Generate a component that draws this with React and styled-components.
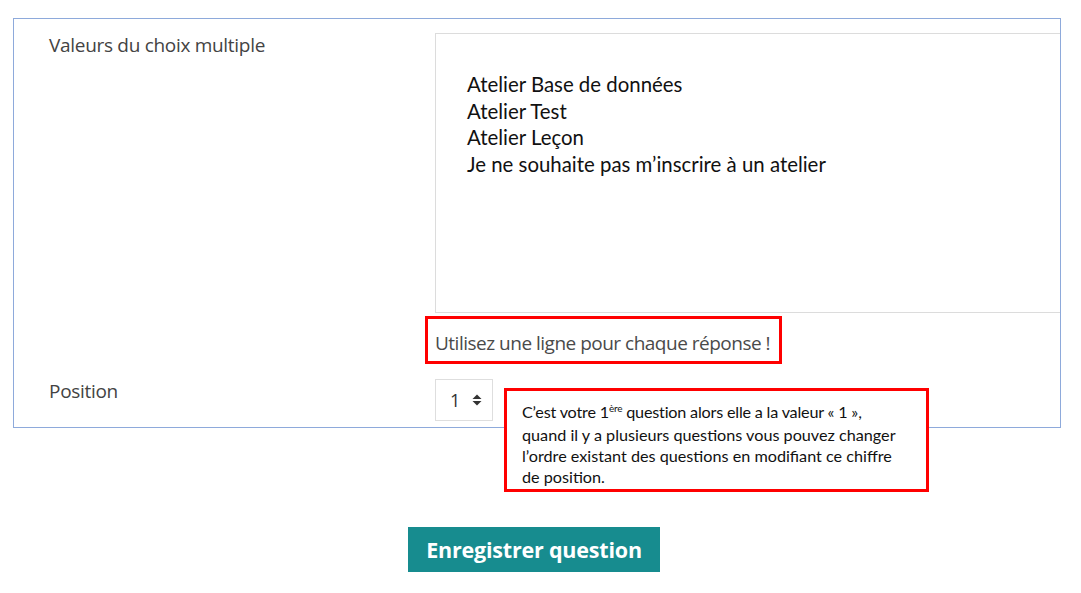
import React from 'react'
import styled, { createGlobalStyle } from 'styled-components'

const GlobalStyle = createGlobalStyle`
  body {
    margin: 0;
    background: #ffffff;
    font-family: "Open Sans", Lato, sans-serif;
  }
`

const Page = styled.div`
  width: 1081px;
  height: 593px;
  padding-top: 18px;
  box-sizing: border-box;
  overflow: hidden;
`

const Panel = styled.div`
  margin-left: 13px;
  width: 1048px;
  height: 410px;
  box-sizing: border-box;
  border: 1px solid #8eaadb;
  padding: 14px 0 0 35px;
`

const Row = styled.div`
  display: grid;
  grid-template-columns: 386px 1fr;
  margin-top: ${props => props.gap || 0}px;
`

const Label = styled.div`
  font-size: 19px;
  line-height: 24px;
  letter-spacing: -0.3px;
  color: #434343;
  padding-top: ${props => props.top || 0}px;
`

const Field = styled.div`
  position: relative;
`

const Choices = styled.textarea`
  display: block;
  width: 100%;
  height: 280px;
  box-sizing: border-box;
  border: 1px solid #dcdcdc;
  border-right: none;
  padding: 37px 31px;
  margin: 0;
  resize: none;
  outline: none;
  font-family: Lato, "Open Sans", sans-serif;
  font-size: 20.4px;
  line-height: 26.5px;
  color: #111;
  overflow: hidden;
`

const HelpNote = styled.div`
  display: inline-block;
  margin: 3px 0 0 -10px;
  border: 3px solid #ff0000;
  padding: 12px 9px 5px 7px;
  font-size: 19px;
  line-height: 25px;
  letter-spacing: -0.5px;
  color: #4a4a4a;
`

const Spinner = styled.div`
  display: flex;
  align-items: center;
  gap: 12px;
  width: 58px;
  height: 42px;
  box-sizing: border-box;
  border: 1px solid #dedede;
  padding-left: 14px;
  font-size: 18px;
  color: #333;
`

const Callout = styled.div`
  position: absolute;
  left: 69px;
  top: 9px;
  width: 425px;
  height: 104px;
  box-sizing: border-box;
  border: 3px solid #ff0000;
  background: #ffffff;
  padding: 8px 6px 0 15px;
  font-family: Lato, "Open Sans", sans-serif;
  font-size: 16.2px;
  line-height: 21px;
  color: #111;
  white-space: nowrap;
`

const Sup = styled.sup`
  font-size: 10px;
  line-height: 0;
`

const FirstLine = styled.div`
  line-height: 25px;
  letter-spacing: -0.2px;
`

const Footer = styled.div`
  padding: 99px 0 0 408px;
`

const SaveButton = styled.button`
  width: 252px;
  height: 45px;
  border: none;
  background: #178c8f;
  color: #ffffff;
  font-family: "Open Sans", Lato, sans-serif;
  font-weight: 700;
  font-size: 21.5px;
  letter-spacing: -0.2px;
  padding: 0;
`

const Arrows = () => (
  <svg width="10" height="12" viewBox="0 0 10 12">
    <path d="M5 0.5 L9.5 5 L0.5 5 Z" fill="#333" />
    <path d="M5 11.5 L9.5 7 L0.5 7 Z" fill="#333" />
  </svg>
)

const choices = [
  'Atelier Base de données',
  'Atelier Test',
  'Atelier Leçon',
  'Je ne souhaite pas m’inscrire à un atelier'
].join('\n')

export default function App() {
  return (
    <Page>
      <GlobalStyle />
      <Panel>
        <Row>
          <Label>Valeurs du choix multiple</Label>
          <Field>
            <Choices readOnly defaultValue={choices} />
            <HelpNote>Utilisez une ligne pour chaque réponse !</HelpNote>
          </Field>
        </Row>
        <Row gap={15}>
          <Label top={0}>Position</Label>
          <Field>
            <Spinner>
              1 <Arrows />
            </Spinner>
            <Callout>
              <FirstLine>
                C’est votre 1<Sup>ère</Sup> question alors elle a la valeur « 1 »,
              </FirstLine>
              quand il y a plusieurs questions vous pouvez changer
              <br />
              l’ordre existant des questions en modifiant ce chiffre
              <br />
              de position.
            </Callout>
          </Field>
        </Row>
      </Panel>
      <Footer>
        <SaveButton>Enregistrer question</SaveButton>
      </Footer>
    </Page>
  )
}
